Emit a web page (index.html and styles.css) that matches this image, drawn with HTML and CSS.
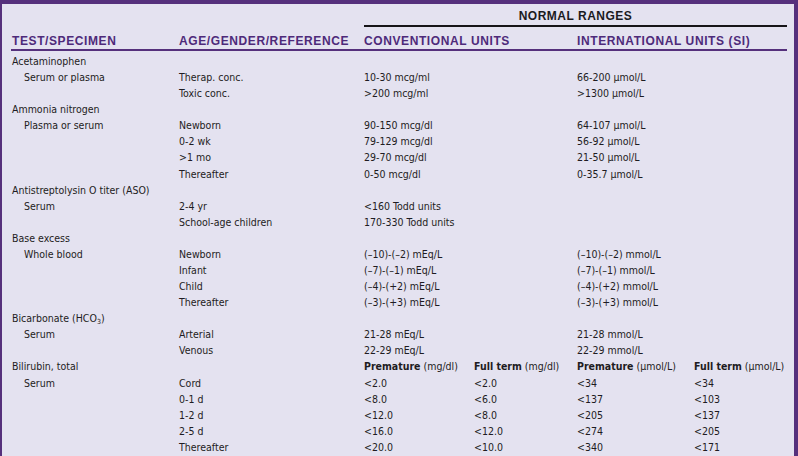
FILE: index.html
```html
<!DOCTYPE html>
<html>
<head>
<meta charset="utf-8">
<link rel="stylesheet" href="styles.css">
</head>
<body>
<div class="frame">
<table class="ranges">
<colgroup>
<col class="w1"><col class="w2"><col class="w3a"><col class="w3b"><col class="w4a"><col class="w4b">
</colgroup>
<thead>
<tr class="top">
<th></th><th></th>
<th colspan="4"><div class="nr">NORMAL RANGES</div></th>
</tr>
<tr class="heads">
<th>TEST/SPECIMEN</th>
<th>AGE/GENDER/REFERENCE</th>
<th colspan="2">CONVENTIONAL UNITS</th>
<th colspan="2">INTERNATIONAL UNITS (SI)</th>
</tr>
</thead>
<tbody>
<tr class="first"><td>Acetaminophen</td><td></td><td colspan="2"></td><td colspan="2"></td></tr>
<tr><td class="ind">Serum or plasma</td><td>Therap. conc.</td><td colspan="2">10-30 mcg/ml</td><td colspan="2">66-200 μmol/L</td></tr>
<tr><td></td><td>Toxic conc.</td><td colspan="2">&gt;200 mcg/ml</td><td colspan="2">&gt;1300 μmol/L</td></tr>
<tr><td>Ammonia nitrogen</td><td></td><td colspan="2"></td><td colspan="2"></td></tr>
<tr><td class="ind">Plasma or serum</td><td>Newborn</td><td colspan="2">90-150 mcg/dl</td><td colspan="2">64-107 μmol/L</td></tr>
<tr><td></td><td>0-2 wk</td><td colspan="2">79-129 mcg/dl</td><td colspan="2">56-92 μmol/L</td></tr>
<tr><td></td><td>&gt;1 mo</td><td colspan="2">29-70 mcg/dl</td><td colspan="2">21-50 μmol/L</td></tr>
<tr><td></td><td>Thereafter</td><td colspan="2">0-50 mcg/dl</td><td colspan="2">0-35.7 μmol/L</td></tr>
<tr><td>Antistreptolysin O titer (ASO)</td><td></td><td colspan="2"></td><td colspan="2"></td></tr>
<tr><td class="ind">Serum</td><td>2-4 yr</td><td colspan="2">&lt;160 Todd units</td><td colspan="2"></td></tr>
<tr><td></td><td>School-age children</td><td colspan="2">170-330 Todd units</td><td colspan="2"></td></tr>
<tr><td>Base excess</td><td></td><td colspan="2"></td><td colspan="2"></td></tr>
<tr><td class="ind">Whole blood</td><td>Newborn</td><td colspan="2">(–10)-(–2) mEq/L</td><td colspan="2">(–10)-(–2) mmol/L</td></tr>
<tr><td></td><td>Infant</td><td colspan="2">(–7)-(–1) mEq/L</td><td colspan="2">(–7)-(–1) mmol/L</td></tr>
<tr><td></td><td>Child</td><td colspan="2">(–4)-(+2) mEq/L</td><td colspan="2">(–4)-(+2) mmol/L</td></tr>
<tr><td></td><td>Thereafter</td><td colspan="2">(–3)-(+3) mEq/L</td><td colspan="2">(–3)-(+3) mmol/L</td></tr>
<tr><td>Bicarbonate (HCO<sub>3</sub>)</td><td></td><td colspan="2"></td><td colspan="2"></td></tr>
<tr><td class="ind">Serum</td><td>Arterial</td><td colspan="2">21-28 mEq/L</td><td colspan="2">21-28 mmol/L</td></tr>
<tr><td></td><td>Venous</td><td colspan="2">22-29 mEq/L</td><td colspan="2">22-29 mmol/L</td></tr>
<tr><td>Bilirubin, total</td><td></td><td><b>Premature</b> (mg/dl)</td><td><b>Full term</b> (mg/dl)</td><td><b>Premature</b> (μmol/L)</td><td><b>Full term</b> (μmol/L)</td></tr>
<tr><td class="ind">Serum</td><td>Cord</td><td>&lt;2.0</td><td>&lt;2.0</td><td>&lt;34</td><td>&lt;34</td></tr>
<tr><td></td><td>0-1 d</td><td>&lt;8.0</td><td>&lt;6.0</td><td>&lt;137</td><td>&lt;103</td></tr>
<tr><td></td><td>1-2 d</td><td>&lt;12.0</td><td>&lt;8.0</td><td>&lt;205</td><td>&lt;137</td></tr>
<tr><td></td><td>2-5 d</td><td>&lt;16.0</td><td>&lt;12.0</td><td>&lt;274</td><td>&lt;205</td></tr>
<tr><td></td><td>Thereafter</td><td>&lt;20.0</td><td>&lt;10.0</td><td>&lt;340</td><td>&lt;171</td></tr>
</tbody>
</table>
</div>
</body>
</html>
```
FILE: styles.css
```css
html, body {
  margin: 0;
  padding: 0;
  background: #e4e2f0;
}
.frame {
  box-sizing: border-box;
  width: 798px;
  height: 456px;
  overflow: hidden;
  background: #e4e2f0;
  border-top: 4px solid #55307c;
  border-left: 2px solid #55307c;
  border-right: 4px solid #55307c;
  padding-left: 9px;
}
.ranges {
  table-layout: fixed;
  width: 776px;
  border-collapse: separate;
  border-spacing: 0;
  font-family: "DejaVu Sans Condensed", "Liberation Sans", sans-serif;
  font-size: 10.5px;
  color: #1e1c22;
}
.w1 { width: 167px; }
.w2 { width: 185px; }
.w3a { width: 110px; }
.w3b { width: 103px; }
.w4a { width: 117px; }
.w4b { width: 94px; }
.ranges th {
  font-family: "Liberation Sans", Arial, sans-serif;
  font-weight: bold;
  font-size: 12px;
  letter-spacing: 0.6px;
  text-align: left;
  padding: 0 0 0 1px;
  line-height: 14px;
  white-space: nowrap;
}
.top th { padding: 0; }
.nr {
  margin-left: 1px;
  padding: 5px 0 2px;
  border-bottom: 2px solid #161418;
  text-align: center;
  color: #1b1a1e;
  letter-spacing: 0.5px;
}
.heads th {
  color: #4e2a7a;
  padding-top: 7px;
  padding-bottom: 1px;
  border-bottom: 2px solid #55307c;
}
.ranges td {
  padding: 0 0 0 1px;
  line-height: 16.08px;
  height: 16.08px;
  white-space: nowrap;
  vertical-align: top;
}
.ranges tr.first td { padding-top: 2px; }
.ranges td.ind { padding-left: 13px; }
.ranges b { font-weight: bold; }
sub {
  font-size: 7px;
  vertical-align: -2px;
  line-height: 0;
}
```
